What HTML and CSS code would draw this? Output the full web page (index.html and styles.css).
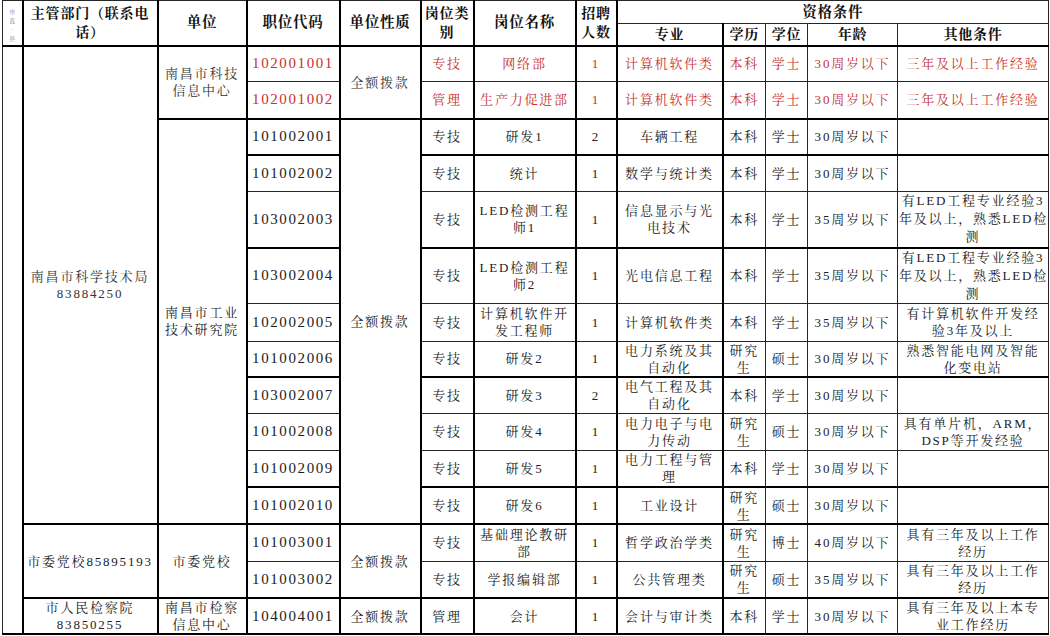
FILE: index.html
```html
<!DOCTYPE html>
<html lang="zh-CN">
<head>
<meta charset="utf-8">
<title>岗位表</title>
<link rel="stylesheet" href="styles.css">
</head>
<body>
<table class="sheet">
  <colgroup>
    <col class="c0"><col class="c1"><col class="c2"><col class="c3"><col class="c4"><col class="c5"><col class="c6"><col class="c7"><col class="c8"><col class="c9"><col class="c10"><col class="c11"><col class="c12">
  </colgroup>
  <tr class="h1">
    <td class="tiny" rowspan="2">市<br>直<br>·<br>县</td>
    <td class="hd" rowspan="2">主管部门（联系电<br>话）</td>
    <td class="hd big" rowspan="2">单位</td>
    <td class="hd big" rowspan="2">职位代码</td>
    <td class="hd big" rowspan="2">单位性质</td>
    <td class="hd" rowspan="2">岗位类<br>别</td>
    <td class="hd big" rowspan="2">岗位名称</td>
    <td class="hd" rowspan="2">招聘<br>人数</td>
    <td class="hd big" colspan="5">资格条件</td>
  </tr>
  <tr class="h2">
    <td class="hd">专业</td>
    <td class="hd">学历</td>
    <td class="hd">学位</td>
    <td class="hd">年龄</td>
    <td class="hd">其他条件</td>
  </tr>

  <tr class="r36 tt red">
    <td class="side" rowspan="15"></td>
    <td class="ink" rowspan="12">南昌市科学技术局<br>83884250</td>
    <td class="ink" rowspan="2">南昌市科技<br>信息中心</td>
    <td class="code">102001001</td>
    <td class="ink" rowspan="2">全额拨款</td>
    <td>专技</td><td>网络部</td><td>1</td><td>计算机软件类</td><td>本科</td><td>学士</td><td>30周岁以下</td><td>三年及以上工作经验</td>
  </tr>
  <tr class="r37 red">
    <td class="code">102001002</td>
    <td>管理</td><td>生产力促进部</td><td>1</td><td>计算机软件类</td><td>本科</td><td>学士</td><td>30周岁以下</td><td>三年及以上工作经验</td>
  </tr>
  <tr class="r36 tt">
    <td rowspan="10">南昌市工业<br>技术研究院</td>
    <td class="code">101002001</td>
    <td rowspan="10">全额拨款</td>
    <td>专技</td><td>研发1</td><td>2</td><td>车辆工程</td><td>本科</td><td>学士</td><td>30周岁以下</td><td></td>
  </tr>
  <tr class="r37 tt">
    <td class="code">101002002</td>
    <td>专技</td><td>统计</td><td>1</td><td>数学与统计类</td><td>本科</td><td>学士</td><td>30周岁以下</td><td></td>
  </tr>
  <tr class="r56">
    <td class="code">103002003</td>
    <td>专技</td><td>LED检测工程<br>师1</td><td>1</td><td>信息显示与光<br>电技术</td><td>本科</td><td>学士</td><td>35周岁以下</td><td class="tall">有LED工程专业经验3<br>年及以上，熟悉LED检<br>测</td>
  </tr>
  <tr class="r55 tt">
    <td class="code">103002004</td>
    <td>专技</td><td>LED检测工程<br>师2</td><td>1</td><td>光电信息工程</td><td>本科</td><td>学士</td><td>35周岁以下</td><td class="tall">有LED工程专业经验3<br>年及以上，熟悉LED检<br>测</td>
  </tr>
  <tr class="r38">
    <td class="code">102002005</td>
    <td>专技</td><td>计算机软件开<br>发工程师</td><td>1</td><td>计算机软件类</td><td>本科</td><td>学士</td><td>35周岁以下</td><td>有计算机软件开发经<br>验3年及以上</td>
  </tr>
  <tr class="r36">
    <td class="code">101002006</td>
    <td>专技</td><td>研发2</td><td>1</td><td>电力系统及其<br>自动化</td><td>研究<br>生</td><td>硕士</td><td>30周岁以下</td><td>熟悉智能电网及智能<br>化变电站</td>
  </tr>
  <tr class="r36 tt">
    <td class="code">103002007</td>
    <td>专技</td><td>研发3</td><td>2</td><td>电气工程及其<br>自动化</td><td>本科</td><td>学士</td><td>30周岁以下</td><td></td>
  </tr>
  <tr class="r37">
    <td class="code">101002008</td>
    <td>专技</td><td>研发4</td><td>1</td><td>电力电子与电<br>力传动</td><td>研究<br>生</td><td>硕士</td><td>30周岁以下</td><td>具有单片机，ARM，<br>DSP等开发经验</td>
  </tr>
  <tr class="r37">
    <td class="code">101002009</td>
    <td>专技</td><td>研发5</td><td>1</td><td>电力工程与管<br>理</td><td>本科</td><td>学士</td><td>30周岁以下</td><td></td>
  </tr>
  <tr class="r37 tt">
    <td class="code">101002010</td>
    <td>专技</td><td>研发6</td><td>1</td><td>工业设计</td><td>研究<br>生</td><td>硕士</td><td>30周岁以下</td><td></td>
  </tr>
  <tr class="r37 tt">
    <td rowspan="2">市委党校85895193</td>
    <td rowspan="2">市委党校</td>
    <td class="code">101003001</td>
    <td rowspan="2">全额拨款</td>
    <td>专技</td><td>基础理论教研<br>部</td><td>1</td><td>哲学政治学类</td><td>研究<br>生</td><td>博士</td><td>40周岁以下</td><td>具有三年及以上工作<br>经历</td>
  </tr>
  <tr class="r37">
    <td class="code">101003002</td>
    <td>专技</td><td>学报编辑部</td><td>1</td><td>公共管理类</td><td>研究<br>生</td><td>硕士</td><td>35周岁以下</td><td>具有三年及以上工作<br>经历</td>
  </tr>
  <tr class="r36 tt last">
    <td>市人民检察院<br>83850255</td>
    <td>南昌市检察<br>信息中心</td>
    <td class="code">104004001</td>
    <td>全额拨款</td>
    <td>管理</td><td>会计</td><td>1</td><td>会计与审计类</td><td>本科</td><td>学士</td><td>30周岁以下</td><td>具有三年及以上本专<br>业工作经历</td>
  </tr>
</table>
</body>
</html>
```

FILE: styles.css
```css
* { box-sizing: border-box; }
html, body { margin: 0; padding: 0; background: #ffffff; }
body {
  font-family: "Liberation Serif", "Noto Serif CJK SC", "Noto Sans CJK SC", serif;
  color: #1c1c1c;
}

.sheet {
  border-collapse: collapse;
  table-layout: fixed;
  width: 1046px;
  margin-left: 2px;
  border-top: 1px solid #222;
  border-right: 1px solid #222;
  border-bottom: 2px solid #000;
  border-left: 1px solid #777;
}

.c0 { width: 20px; }
.c1 { width: 135px; border-left: 2px solid #000; }
.c2 { width: 89px; border-left: 2px solid #000; }
.c3 { width: 93px; border-left: 2px solid #000; }
.c4 { width: 81px; border-left: 2px solid #000; }
.c5 { width: 53px; border-left: 2px solid #000; }
.c6 { width: 102px; border-left: 2px solid #000; }
.c7 { width: 41px; border-left: 2px solid #000; }
.c8 { width: 106px; border-left: 2px solid #000; }
.c9 { width: 43px; border-left: 2px solid #000; }
.c10 { width: 42px; }
.c11 { width: 90px; }
.c12 { width: 151px; }

.sheet td {
  border: 1px solid #262626;
  padding: 0 1px;
  text-align: center;
  vertical-align: middle;
  white-space: nowrap;
  overflow: hidden;
  font-size: 13px;
  letter-spacing: 1.8px;
  line-height: 17px;
  font-weight: normal;
  color: #222;
}

.sheet tr.tt { border-top: 2px solid #000; }

.h1 { height: 23px; }
.h2 { height: 22px; }
.r36 { height: 36px; }
.r37 { height: 37px; }
.r38 { height: 38px; }
.r55 { height: 55px; }
.r56 { height: 56px; }

.sheet td.hd {
  font-weight: bold;
  font-size: 14px;
  letter-spacing: 0.8px;
  line-height: 19px;
  color: #111;
}
.sheet td.big { font-size: 14.5px; }

.sheet td.tiny {
  font-size: 6px;
  line-height: 9px;
  letter-spacing: 0;
  color: #8a8a8a;
  vertical-align: top;
  padding-top: 7px;
}

.sheet td.code {
  font-size: 15px;
  letter-spacing: 1.6px;
  color: #1c1c1c;
}

.sheet td.tall { line-height: 18px; }

.sheet tr.red td { color: #c93030; }
.sheet tr.red td.code { color: #c93030; }
.sheet tr.red td.ink { color: #333; }
```
